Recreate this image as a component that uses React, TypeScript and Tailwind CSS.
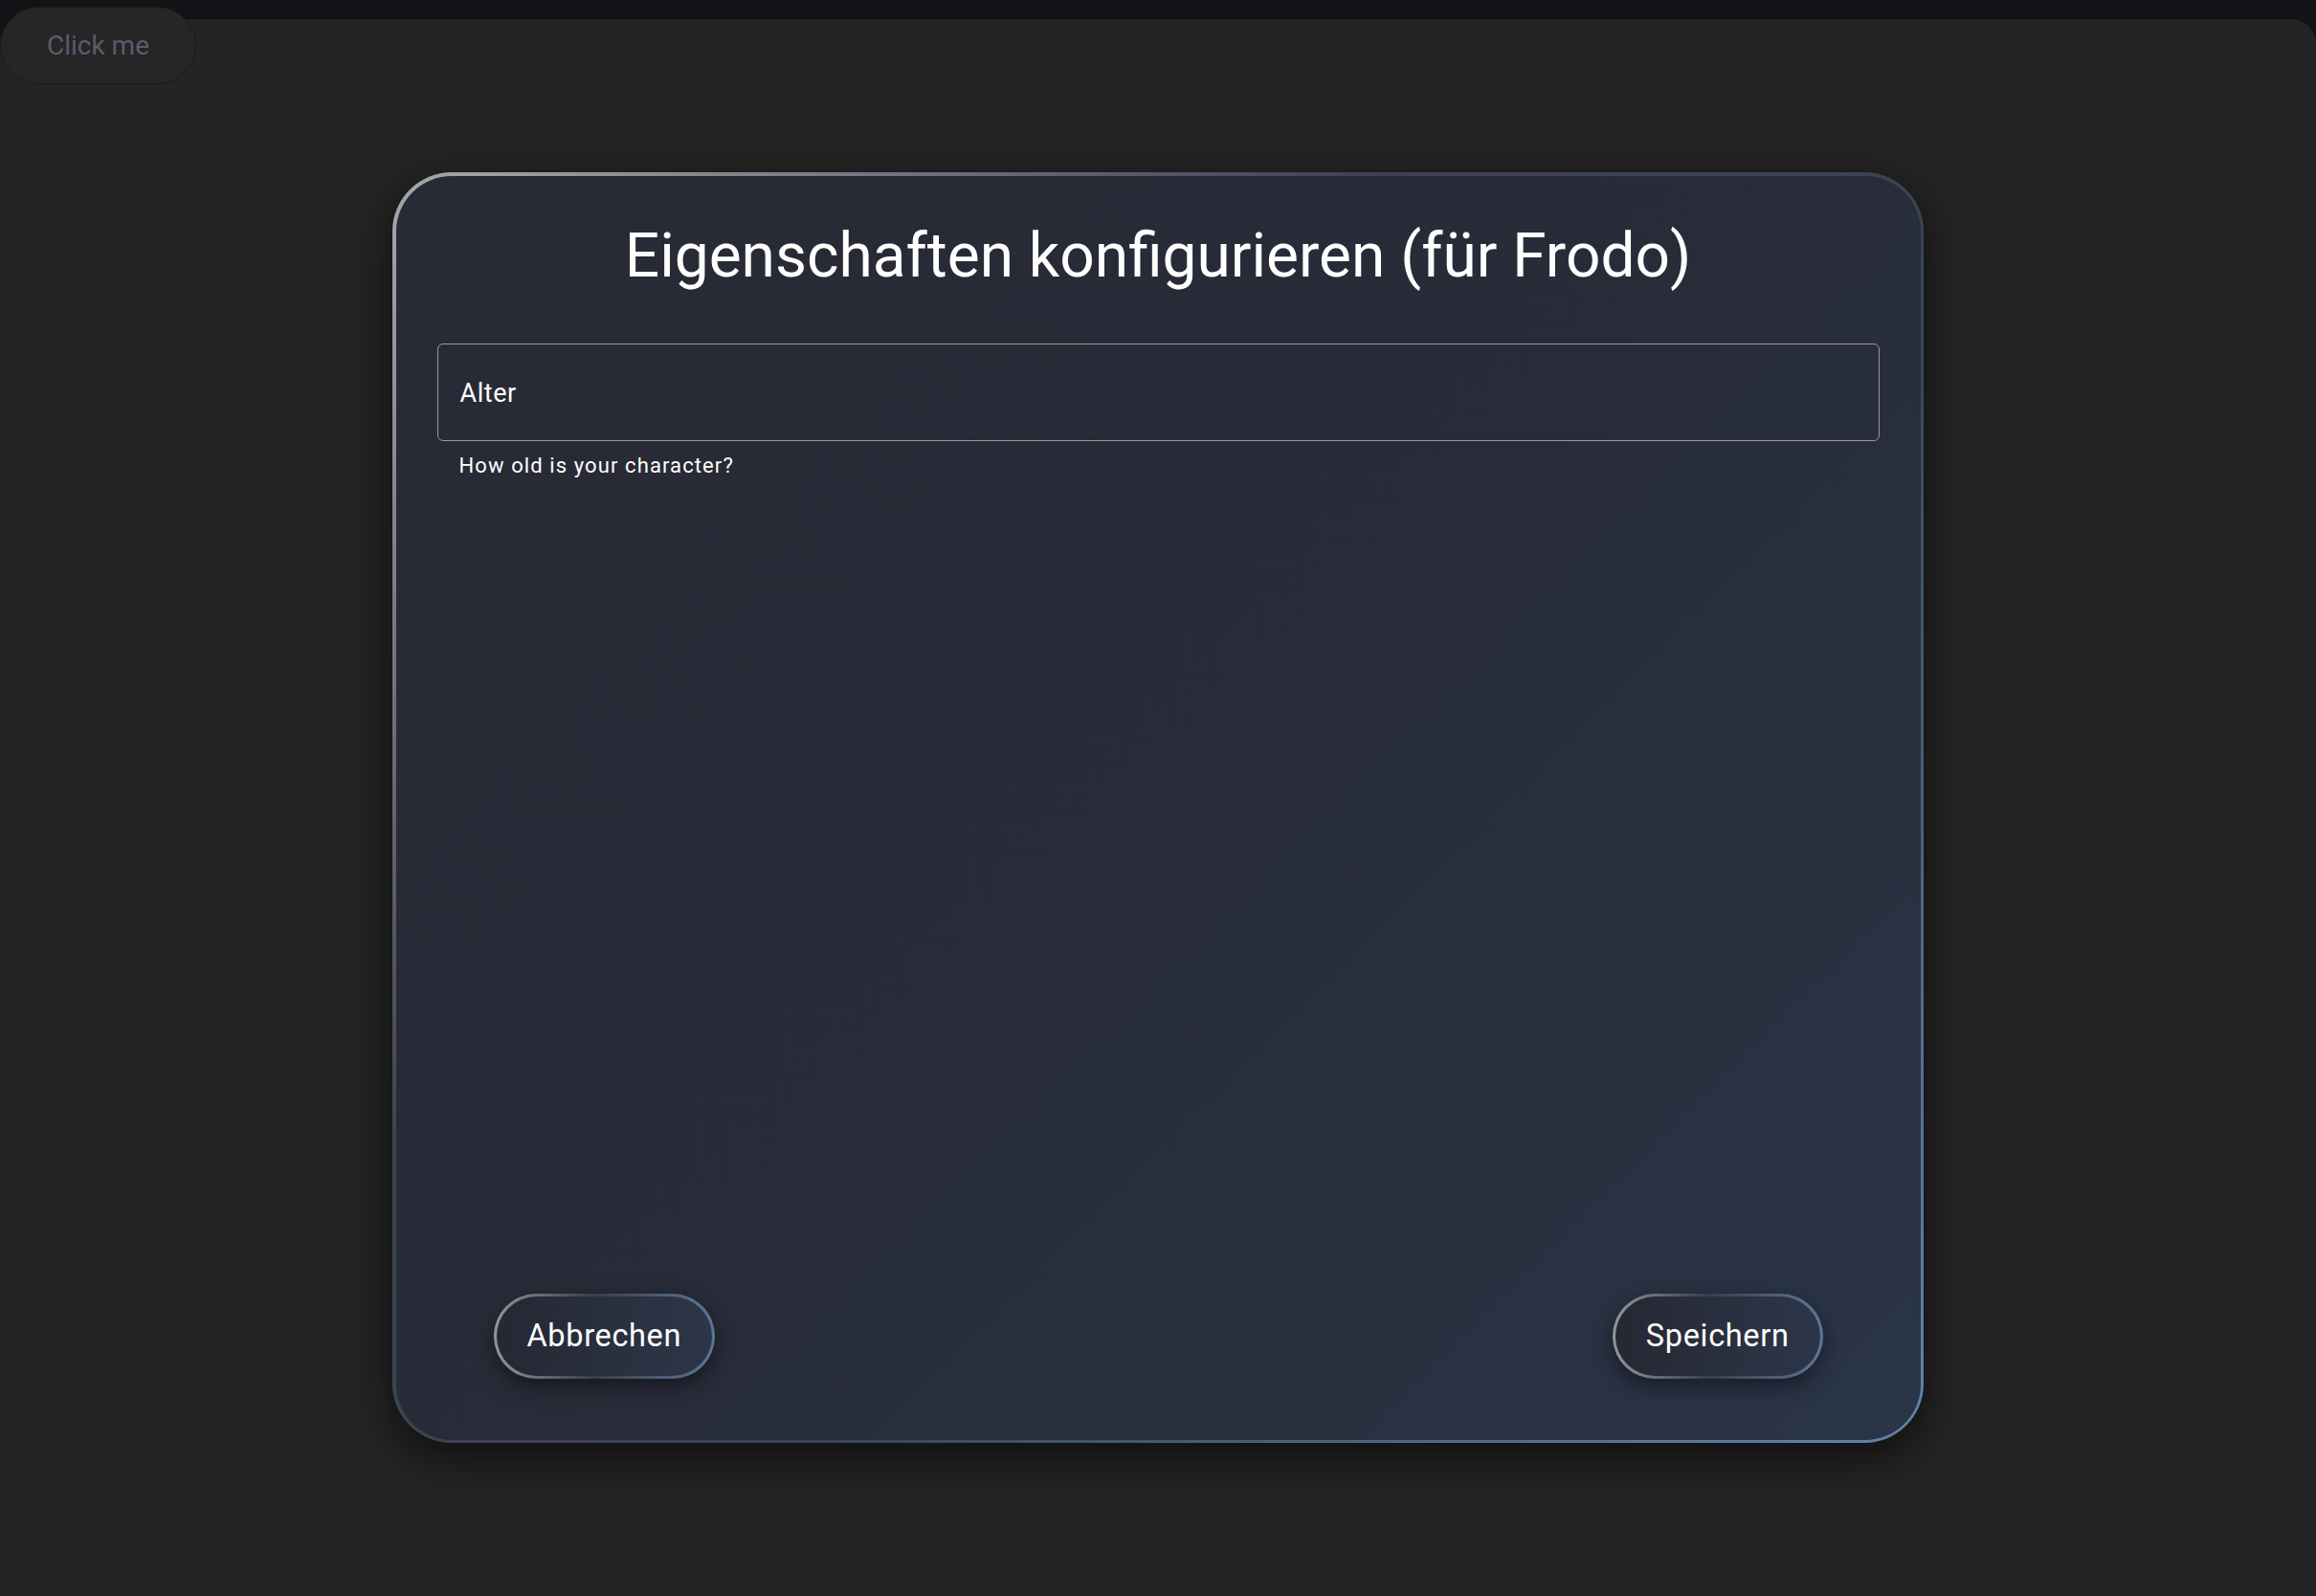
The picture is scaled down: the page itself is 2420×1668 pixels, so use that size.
import React from 'react';

const GlassButton: React.FC<{ label: string }> = ({ label }) => (
    <button className="rounded-full p-[3px] bg-[linear-gradient(90deg,#92959b,#3a3d48_45%,#5b7798)] shadow-[0_8px_22px_rgba(0,0,0,0.45)]">
        <span className="flex h-[83px] items-center rounded-full px-[32px] bg-[linear-gradient(90deg,#262833,#2c3649)] text-[32.5px] text-white tracking-[0.02em]">
            {label}
        </span>
    </button>
);

export default function App() {
    return (
        <div className="min-h-screen bg-[#131217] pt-[20px] font-['Roboto',sans-serif]">
            <div className="relative flex min-h-[1648px] items-center justify-center rounded-t-[26px] bg-[#242424]">
                {/* Floating trigger button */}
                <button className="absolute left-0 top-[-13px] flex h-[81px] w-[205px] items-center justify-center rounded-full border border-[#1a1a1a] bg-[#262626] text-[28px] text-[#5e5a6b]">
                    Click me
                </button>

                {/* Dialog */}
                <div className="h-[1328px] w-[1600px] rounded-[62px] p-[3.5px] bg-[linear-gradient(135deg,#a7a8ac_0%,#3d4252_35%,#3a4456_60%,#6385aa_100%)] shadow-[0_14px_44px_rgba(0,0,0,0.6)]">
                    <div className="flex h-full flex-col rounded-[58px] px-[43px] bg-[linear-gradient(135deg,#282a35,#282c38_50%,#2a3548)]">
                        <h2 className="pt-[46px] text-center text-[64px] leading-[75px] text-white">
                            Eigenschaften konfigurieren (für Frodo)
                        </h2>

                        <div className="mt-[54px] flex h-[102px] items-center rounded-[6px] border-[1.5px] border-[#9a99a3] px-[23px] pt-[3px] text-[27px] tracking-[0.02em] text-white">
                            Alter
                        </div>
                        <p className="mt-[11px] px-[23px] text-[22px] leading-[30px] tracking-[0.05em] text-white">
                            How old is your character?
                        </p>

                        <div className="flex-1" />

                        <div className="flex items-center justify-between px-[59px] pb-[64px]">
                            <GlassButton label="Abbrechen" />
                            <GlassButton label="Speichern" />
                        </div>
                    </div>
                </div>
            </div>
        </div>
    );
}
